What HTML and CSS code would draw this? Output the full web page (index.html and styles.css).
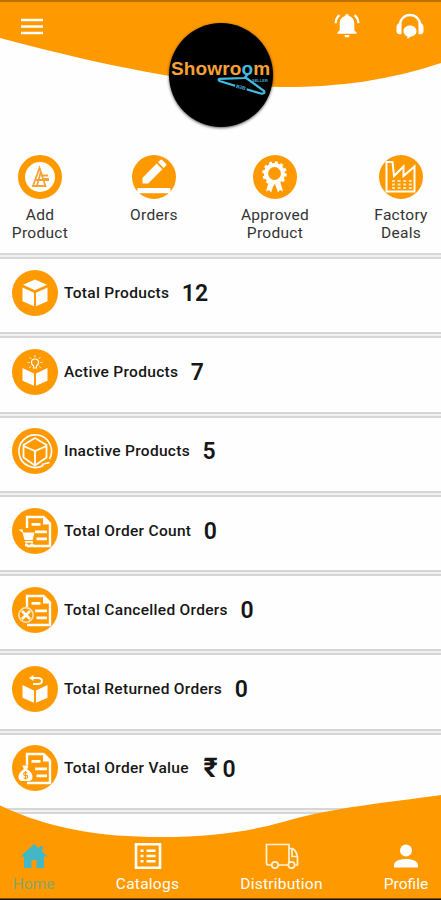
FILE: index.html
```html
<!DOCTYPE html>
<html lang="en">
<head>
<meta charset="utf-8">
<title>Showroom</title>
<link rel="stylesheet" href="styles.css">
</head>
<body>
<svg class="defs" width="0" height="0" aria-hidden="true">
  <symbol id="doc" viewBox="0 0 46 46">
    <path d="M15 20V9H31.500L38 15.500V38H15" fill="none" stroke="#fff" stroke-width="2.400"/>
    <path d="M31 8v8.500h8zM19.500 15h9v2.700h-9zM23 22.500h12v2.700H23zM24.500 29.500H35v2.700H24.500z" fill="#fff"/>
  </symbol>
  <symbol id="openbox" viewBox="0 0 46 46">
    <path d="M10.500 19l11.500 5.500v12.200l-11.500-5zM35.500 19L24 24.500v12.200l11.500-5z" fill="#fff"/>
  </symbol>
</svg>
<main class="app">
  <header class="top">
    <svg class="wave" viewBox="0 0 441 90" width="441" height="90"><path d="M0 0H441V63C390 80 340 87 285 87C200 87 90 62 0 38Z" fill="#ff9900"/><path d="M0 0H441V2H0Z" fill="#bd7100"/></svg>
    <div class="toolbar">
      <svg class="menu" width="22" height="17" viewBox="0 0 22 17"><path d="M0 2h22M0 8.500h22M0 15h22" stroke="#fff" stroke-width="2.600"/></svg>
      <svg class="bell" width="26" height="26" viewBox="0 0 26 26"><path d="M13 1c1.200 0 1.900.8 1.900 2.100C18.500 4 20.300 7 20.300 10.500v6.700l2.300 2.300v1.300H3.400v-1.300l2.300-2.300v-6.700C5.700 7 7.500 4 11.100 3.100 11.100 1.800 11.800 1 13 1zM10.500 22h5a2.500 2.500 0 0 1-5 0z" fill="#fff"/><path d="M5.500 2.200C3 4.200 1.700 7 1.600 10.200M20.500 2.200c2.500 2 3.800 4.800 3.900 8" fill="none" stroke="#fff" stroke-width="2.200"/></svg>
      <svg class="support" width="28" height="27" viewBox="0 0 28 27"><path d="M4 13V11.500a10 9.500 0 0 1 20 0V13" fill="none" stroke="#fff" stroke-width="2.400"/><path d="M2 10.500h3.500v10.800H3.400Q.5 21 .5 18v-4Q.5 11.500 2 10.500zM26 10.500h-3.500v10.800h2.100q2.900-.3 2.900-3.300v-4q0-2.500-1.500-3.500zM14 12.500c4 0 6.500 2.500 6.500 5.600s-2.300 5.200-5.500 5.500L11.300 26v-2.700c-2.600-.8-3.800-2.700-3.800-5.200 0-3.100 2.500-5.600 6.500-5.600z" fill="#fff"/></svg>
    </div>
    <div class="logo">
      <span class="brand">Showro<i>o</i>m</span>
      <svg class="hanger" width="104" height="104" viewBox="0 0 104 104"><path d="M79 51l-3.500 4-25 .8q-2 1 0 2.200L91.500 70.500q5 .5 3.500-2.500L76.500 54.500" fill="none" stroke="#42bce0" stroke-width="2.200"/></svg>
      <span class="seller">SELLER</span>
      <span class="b2b">B2B</span>
    </div>
  </header>

  <nav class="actions">
    <a class="action a1"><svg width="44" height="44" viewBox="0 0 44 44"><circle cx="22" cy="22" r="18.500" fill="#fff" stroke="#ff9900" stroke-width="7"/><path d="M15 31l6.500-18 6 18zM18 25h13M23 20.500h7M19 31l4-15M24 24h7" fill="none" stroke="#f5a337" stroke-width="1.800"/></svg><span>Add<br>Product</span></a>
    <a class="action a2"><svg width="44" height="44" viewBox="0 0 44 44"><circle cx="22" cy="22" r="22" fill="#ff9900"/><path d="M10.500 28.500v-5.700L24.700 8.600l5.700 5.700-14.200 14.200zM26 7.300l2.300-2.300q1-1 2 0l3.700 3.700q1 1 0 2L31.700 13zM5.500 33h33v5.200h-33z" fill="#fff"/></svg><span>Orders</span></a>
    <a class="action a3"><svg width="44" height="44" viewBox="0 0 44 44"><circle cx="22" cy="22" r="22" fill="#ff9900"/><circle cx="21.500" cy="18.500" r="8.500" fill="none" stroke="#fff" stroke-width="4.200"/><circle cx="21.500" cy="18.500" r="11" fill="none" stroke="#fff" stroke-width="2.500" stroke-dasharray="2.900 2.860"/><path d="M16 26l5 3-3 8.500-2-2.500-3 1.500zM27 26l-5 3 3 8.500 2-2.500 3 1.500z" fill="#fff"/></svg><span>Approved<br>Product</span></a>
    <a class="action a4"><svg width="44" height="44" viewBox="0 0 44 44"><circle cx="22" cy="22" r="22" fill="#ff9900"/><path d="M7.500 36.500V7h6l1.500 14L24.500 11.500V21L35.500 11.500v25z" fill="none" stroke="#fff" stroke-width="2"/><path d="M13 26h20M13 29.500h20M13 33h20" stroke="#ffe3b0" stroke-width="1.800" stroke-dasharray="3 2.600"/></svg><span>Factory<br>Deals</span></a>
  </nav>

  <section class="stats">
    <div class="row"><svg width="46" height="46" viewBox="0 0 46 46"><circle cx="23" cy="23" r="23" fill="#ff9900"/><path d="M23 9.500l12 5.200L23 20.300 11 14.700zM10.500 17.500L22 22.700v13.500l-11.500-5zM35.500 17.500L24 22.700v13.500l11.500-5z" fill="#fff"/></svg><span class="label">Total Products</span><b>12</b></div>
    <div class="row"><svg width="46" height="46" viewBox="0 0 46 46"><circle cx="23" cy="23" r="23" fill="#ff9900"/><use href="#openbox"/><path d="M21.500 19v-2q-2-1.500-2-3.500a3.500 3.500 0 0 1 7 0q0 2-2 3.500v2z" fill="none" stroke="#fff" stroke-width="1.200"/><path d="M23 6v2.500M17.500 8l1.800 2M28.500 8l-1.800 2M15.500 13.500h2.300M28.200 13.500h2.300M17 19l2-1.700M29 19l-2-1.700" stroke="#ffe8c0" stroke-width="1"/></svg><span class="label">Active Products</span><b>7</b></div>
    <div class="row"><svg width="46" height="46" viewBox="0 0 46 46"><circle cx="23" cy="23" r="23" fill="#ff9900"/><path d="M31.500 37.200A16.300 16.300 0 1 1 37.500 31M30 36.500l7.500-2" fill="none" stroke="#fff" stroke-width="1.600"/><path d="M11.500 17L23 10l11.500 7v12.500L23 37.500l-11.500-8zM11.500 18L23 23l11.500-5M23 23v14" fill="none" stroke="#fff" stroke-width="1.800"/></svg><span class="label">Inactive Products</span><b>5</b></div>
    <div class="row"><svg width="46" height="46" viewBox="0 0 46 46"><circle cx="23" cy="23" r="23" fill="#ff9900"/><use href="#doc"/><path d="M6.500 21.500h4l1 3H22.500l-1.800 7.500H12.500l-2-7.500zM13 33h8v1.800h-8z" fill="#fff"/><circle cx="14.500" cy="37" r="1.700" fill="#fff"/><circle cx="20" cy="37" r="1.700" fill="#fff"/></svg><span class="label">Total Order Count</span><b>0</b></div>
    <div class="row"><svg width="46" height="46" viewBox="0 0 46 46"><circle cx="23" cy="23" r="23" fill="#ff9900"/><use href="#doc"/><circle cx="14" cy="28" r="7.200" fill="#ff9900" stroke="#ffe8c0" stroke-width="1.500"/><path d="M10 24l8 8M18 24l-8 8" stroke="#fff" stroke-width="2.600"/></svg><span class="label">Total Cancelled Orders</span><b>0</b></div>
    <div class="row"><svg width="46" height="46" viewBox="0 0 46 46"><circle cx="23" cy="23" r="23" fill="#ff9900"/><use href="#openbox"/><path d="M19 12h7.500q3.500.3 3.500 3t-3.500 3H21" fill="none" stroke="#fff" stroke-width="1.800"/><path d="M21.500 9v6L17 12z" fill="#fff"/></svg><span class="label">Total Returned Orders</span><b>0</b></div>
    <div class="row"><svg width="46" height="46" viewBox="0 0 46 46"><circle cx="23" cy="23" r="23" fill="#ff9900"/><use href="#doc"/><path d="M10.500 20.500h6l-1.300 3.800q5.300 3.200 5.300 7.700 0 4-4 4h-6q-4 0-4-4 0-4.500 5.300-7.700z" fill="#fff"/><path d="M15.500 27.800q-3.800-1-3.800 1t2 1.500 1.800 1.700-3.700.8M13.600 26v8.500" fill="none" stroke="#ff9900" stroke-width="1.100"/></svg><span class="label">Total Order Value</span><b><span class="rupee">₹</span>0</b></div>
    <div class="row last"></div>
  </section>

  <footer class="bottom">
    <svg class="wave" viewBox="0 0 441 106" width="441" height="106"><path d="M0 11.500C50 35 100 43 160 43C215 43 250 37 283 28C335 13 385 9 441 1V106H0Z" fill="#ff9900"/><path d="M0 104.500H441V106H0Z" fill="#160c00"/></svg>
    <nav class="tabs">
      <a class="tab t1"><svg width="28" height="26" viewBox="0 0 28 26"><path d="M14 1L.5 13.500H4V25h7.500v-8h5v8H24V13.500h3.500l-5-4.500V3h-3v3z" fill="#42b8c6"/></svg><span>Home</span></a>
      <a class="tab t2"><svg width="28" height="26" viewBox="0 0 28 26"><path d="M2 1.300h24v23.500H2z" fill="none" stroke="#fff" stroke-width="2.600"/><path d="M6.500 7.800h3M6.500 13h3M6.500 18.200h3M12.500 7.800h9M12.500 13h9M12.500 18.200h9" stroke="#fff" stroke-width="2.600"/></svg><span>Catalogs</span></a>
      <a class="tab t3"><svg width="34" height="26" viewBox="0 0 34 26"><path d="M7 22H3.500Q1.500 22 1.500 20V1.500h22.500V22H13M24 5.500h3.500q4.500 3 5 9V22h-2M24 22h1M27 6v7.500h5" fill="none" stroke="#fff2d8" stroke-width="1.700"/><circle cx="10" cy="22" r="3.200" fill="#ff9900" stroke="#fff2d8" stroke-width="1.700"/><circle cx="26.500" cy="22" r="3.200" fill="#ff9900" stroke="#fff2d8" stroke-width="1.700"/></svg><span>Distribution</span></a>
      <a class="tab t4"><svg width="26" height="26" viewBox="0 0 26 26"><circle cx="13" cy="7.500" r="6" fill="#fff"/><path d="M1 24.500v-2.500c0-4.500 7.500-6 12-6s12 1.500 12 6v2.500z" fill="#fff"/></svg><span>Profile</span></a>
    </nav>
  </footer>
</main>
</body>
</html>
```
FILE: styles.css
```css
* { box-sizing: border-box; }
body { margin: 0; background: #fff; font-family: Roboto, "Liberation Sans", sans-serif; }
svg { display: block; flex: none; }
.defs { position: absolute; }
.app { position: relative; width: 441px; height: 900px; overflow: hidden; background: #fefefe; }

.top { position: relative; height: 155px; }
.wave { position: absolute; left: 0; top: 0; }
.toolbar { position: relative; display: flex; align-items: flex-start; padding: 13px 17px 0 21px; }
.menu { margin: 5px auto 0 0; }
.bell { margin-right: 36px; }
.logo { position: absolute; left: 169px; top: 23px; width: 104px; height: 104px; border-radius: 50%; background: #000; box-shadow: 0 1px 3px rgba(0, 0, 0, .65); }
.brand { position: absolute; left: 2px; top: 37px; font: bold 19px/17px "Liberation Sans", sans-serif; letter-spacing: .12px; color: #f9a034; }
.brand i { font-style: normal; color: #42bce0; }
.hanger { position: absolute; left: 0; top: 0; }
.seller { position: absolute; left: 83px; top: 55px; font: bold 4px/5px "Liberation Sans", sans-serif; color: #42a4c4; }
.b2b { position: absolute; left: 66px; top: 61px; padding: 0 1px; background: #000; font: bold 5px/6px "Liberation Sans", sans-serif; color: #42bce0; transform: rotate(14deg); }

.actions { display: flex; align-items: flex-start; height: 98px; padding: 0 12px; }
.action { display: flex; flex-direction: column; align-items: center; gap: 7px; font-size: 15.5px; line-height: 18.3px; letter-spacing: .3px; color: #333; text-align: center; white-space: nowrap; }
.a1 { width: 56px; }
.a2 { width: 48px; margin-left: 62px; }
.a3 { width: 69px; margin-left: 62.5px; }
.a4 { width: 55px; margin-left: 64px; }

.row { display: flex; align-items: center; height: 79.3px; padding-left: 12px; background: linear-gradient(#d6d6d6 0 2px, #f1f1f1 2px 4px, #d6d6d6 4px 6px, #fefefe 6px); color: #161616; }
.label { margin-left: 6px; font-size: 15.5px; font-weight: 500; letter-spacing: .3px; white-space: nowrap; }
.row b { margin: 2px 0 0 12.5px; font-size: 23px; font-weight: 600; line-height: 28px; }
.rupee { display: inline-block; margin: 0 5px 0 2px; font-size: 27px; line-height: 28px; font-weight: 700; }

.bottom { position: absolute; left: 0; bottom: 0; width: 441px; height: 106px; }
.tabs { position: relative; display: flex; padding: 49px 12px 0; }
.tab { display: flex; flex-direction: column; align-items: center; gap: 6px; font-size: 15.5px; line-height: 18px; color: #fff; white-space: nowrap; }
.t1 { width: 43px; color: #8aa566; }
.t2 { width: 64px; margin-left: 60.5px; }
.t3 { width: 83px; margin-left: 60.5px; }
.t4 { width: 46px; margin-left: 60px; }
.t2 span, .t3 span { letter-spacing: .25px; }
```
